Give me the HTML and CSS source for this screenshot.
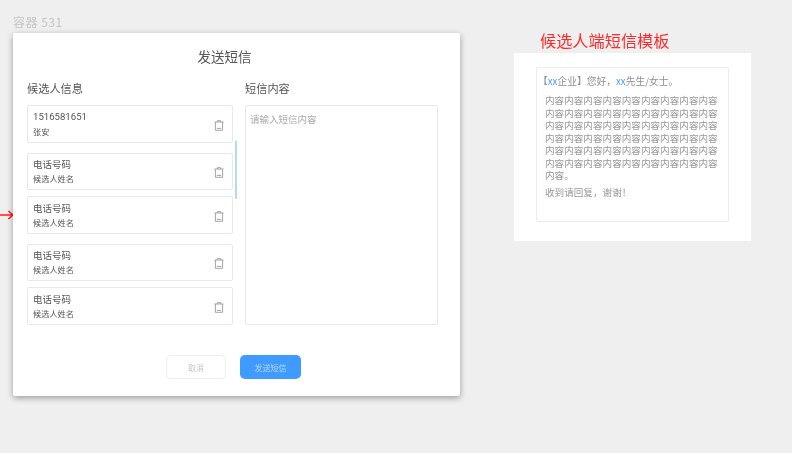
FILE: index.html
```html
<!DOCTYPE html>
<html lang="zh">
<head>
<meta charset="utf-8">
<title>发送短信</title>
<link rel="stylesheet" href="styles.css">
</head>
<body>
<svg width="0" height="0" class="defs"><symbol id="trash" viewBox="0 0 10 11"><path d="M0.5 2h9M3.3 2V0.7h3.4V2M1.4 2v8.3h7.2V2M2.8 8.4h4.4" fill="none" stroke="currentColor" stroke-width="0.9"/></symbol></svg>
<div class="frame-label">容器 531</div>
<svg class="arrow" width="14" height="12" viewBox="0 0 14 12"><path d="M0 6h12.5M8.5 2L12.8 6 8.5 10" fill="none" stroke="#ff2020" stroke-width="1.6"/></svg>
<section class="modal">
  <h1 class="modal-title">发送短信</h1>
  <div class="columns">
    <div class="col-left">
      <h2 class="section-title">候选人信息</h2>
      <div class="card"><div class="who"><div class="phone num">1516581651</div><div class="name">张安</div></div><svg class="icon"><use href="#trash"/></svg></div>
      <div class="card far"><div class="who"><div class="phone">电话号码</div><div class="name">候选人姓名</div></div><svg class="icon"><use href="#trash"/></svg></div>
      <div class="card near"><div class="who"><div class="phone">电话号码</div><div class="name">候选人姓名</div></div><svg class="icon"><use href="#trash"/></svg></div>
      <div class="card far"><div class="who"><div class="phone">电话号码</div><div class="name">候选人姓名</div></div><svg class="icon"><use href="#trash"/></svg></div>
      <div class="card near"><div class="who"><div class="phone">电话号码</div><div class="name">候选人姓名</div></div><svg class="icon"><use href="#trash"/></svg></div>
      <div class="scroll-thumb"></div>
    </div>
    <div class="col-right">
      <h2 class="section-title">短信内容</h2>
      <div class="textarea">请输入短信内容</div>
    </div>
  </div>
  <div class="actions">
    <button class="btn btn-ghost">取消</button>
    <button class="btn btn-primary">发送短信</button>
  </div>
</section>
<div class="template-title">候选人端短信模板</div>
<section class="template">
  <div class="template-card">
    <p class="tpl-head">【<span class="blue">xx</span>企业】您好，<span class="blue">xx</span>先生/女士。</p>
    <p class="tpl-body">内容内容内容内容内容内容内容内容内容内容内容内容内容内容内容内容内容内容内容内容内容内容内容内容内容内容内容内容内容内容内容内容内容内容内容内容内容内容内容内容内容内容内容内容内容内容内容内容内容内容内容内容内容内容内容。</p>
    <p class="tpl-foot">收到请回复，谢谢！</p>
  </div>
</section>
</body>
</html>
```
FILE: styles.css
```css
* { box-sizing: border-box; }
html, body { margin: 0; height: 100%; }
body {
  position: relative;
  overflow: hidden;
  background: #efefef;
  font-family: "Noto Sans CJK SC", "Noto Sans", sans-serif;
  color: #555;
}
.frame-label, .arrow, .modal, .template-title, .template { filter: blur(0.45px); }
.defs { position: absolute; }
.frame-label { position: absolute; left: 13px; top: 14px; font-size: 12px; line-height: 16px; color: #c4c4c4; letter-spacing: 0.5px; }
.arrow { position: absolute; left: 0; top: 209px; }
.modal {
  position: absolute; left: 13px; top: 33px; width: 447px; height: 363px;
  background: #fff; border-radius: 2px;
  box-shadow: 0 2px 6px rgba(0,0,0,.35);
  display: flex; flex-direction: column;
  padding: 13px 22px 17px 14px;
}
.modal-title { margin: 0; font-size: 13.5px; line-height: 20px; font-weight: 400; text-align: center; color: #555; padding-right: 16px; }
.columns { display: flex; gap: 12px; margin-top: 14px; }
.col-left { position: relative; width: 206px; }
.col-right { width: 193px; }
.section-title { margin: 0 0 9px; font-size: 11.2px; line-height: 16px; font-weight: 400; color: #555; }
.card {
  height: 37.5px; border: 1px solid #e8e8e8; border-radius: 2px;
  display: flex; align-items: center; justify-content: space-between;
  padding: 0 8px 0 5px; background: #fff;
}
.card.far { margin-top: 10px; }
.card.near { margin-top: 6px; }
.who { padding-bottom: 1px; }
.phone { font-size: 9.5px; line-height: 14px; color: #555; }
.phone.num { font-family: "Roboto", sans-serif; font-size: 9.6px; }
.name { font-size: 8.2px; line-height: 12px; margin-top: 1px; color: #555; }
.icon { width: 10px; height: 11px; color: #9a9a9a; margin-top: 3px; }
.scroll-thumb { position: absolute; left: 208px; top: 61px; width: 2px; height: 58px; background: #b8d8fb; }
.textarea {
  height: 220px; border: 1px solid #e8e8e8; border-radius: 2px;
  padding: 6px 4px; font-size: 9.5px; line-height: 14px; color: #aaa;
}
.actions { display: flex; gap: 14px; margin-top: 30px; padding-left: 139px; }
.btn { height: 24px; border-radius: 5px; font: inherit; font-size: 8px; padding: 0; }
.btn-ghost { width: 60px; background: #fff; border: 1px solid #eee; color: #c4c4c4; }
.btn-primary { width: 61px; background: #3f9bff; border: 0; color: #b5d8ff; }
.template-title { position: absolute; left: 540px; top: 28px; font-size: 16.2px; line-height: 24px; color: #ff2a2a; }
.template {
  position: absolute; left: 514px; top: 53px; width: 237px; height: 188px;
  background: #fff; padding: 14px 22px;
}
.template-card {
  height: 155px; border: 1px solid #ececec; border-radius: 2px;
  padding: 6px 9px 0 1px; color: #999;
}
.template-card p { margin: 0; }
.tpl-head { font-size: 9.75px; line-height: 14px; color: #8f8f8f; }
.blue { color: #4a9dff; }
.tpl-body { font-size: 9.6px; line-height: 12.5px; margin: 6px 0 0 7px !important; }
.tpl-foot { font-size: 9.6px; line-height: 14px; margin: 3px 0 0 7px !important; }
```
